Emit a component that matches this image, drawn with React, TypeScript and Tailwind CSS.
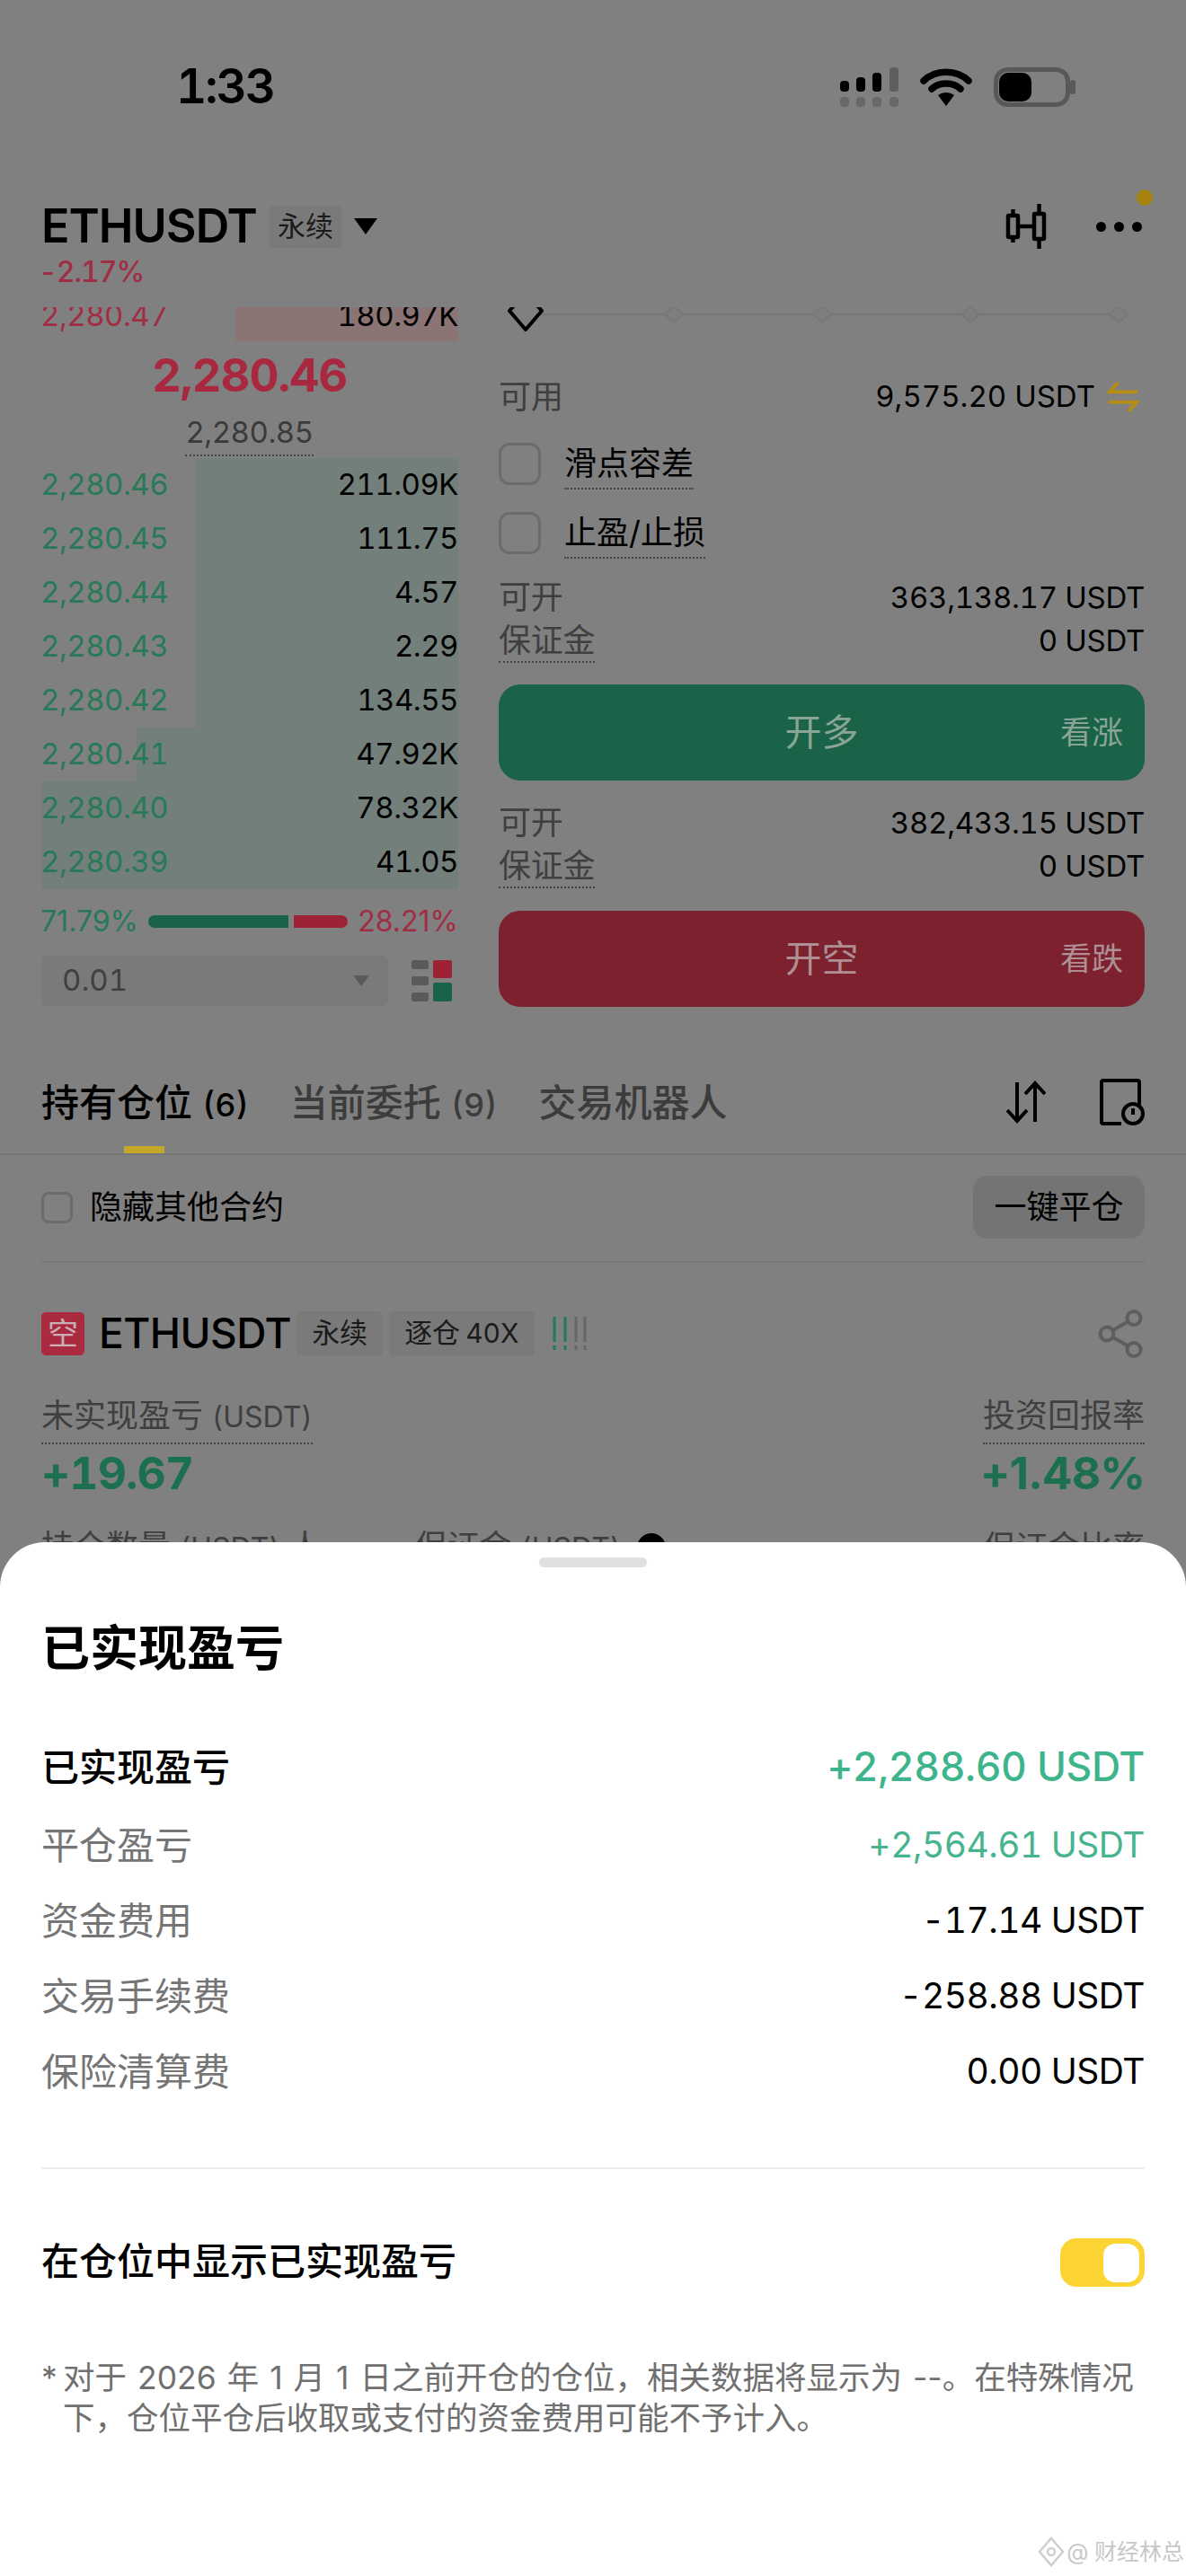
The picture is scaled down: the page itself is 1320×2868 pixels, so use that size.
import React from 'react';
import { Share2 } from 'lucide-react';

const bids = [
  { price: '2,280.46', size: '211.09K', left: 172 },
  { price: '2,280.45', size: '111.75', left: 172 },
  { price: '2,280.44', size: '4.57', left: 172 },
  { price: '2,280.43', size: '2.29', left: 172 },
  { price: '2,280.42', size: '134.55', left: 172 },
  { price: '2,280.41', size: '47.92K', left: 106 },
  { price: '2,280.40', size: '78.32K', left: 0 },
  { price: '2,280.39', size: '41.05', left: 0 },
];

const pnlRows = [
  { label: '平仓盈亏', value: '+2,564.61 USDT', green: true },
  { label: '资金费用', value: '-17.14 USDT', green: false },
  { label: '交易手续费', value: '-258.88 USDT', green: false },
  { label: '保险清算费', value: '0.00 USDT', green: false },
];

function StatusIcons() {
  return (
    <div className="flex items-center gap-[24px]">
      <svg width="65" height="44" viewBox="0 0 65 44">
        <rect x="0" y="15" width="10" height="12" rx="4" fill="#000" />
        <rect x="18" y="11" width="10" height="16" rx="4" fill="#000" />
        <rect x="36" y="6" width="10" height="21" rx="4" fill="#000" />
        <rect x="55" y="0" width="10" height="27" rx="3" fill="#5e5e5e" />
        <rect x="0" y="33" width="10" height="11" rx="4" fill="#686868" />
        <rect x="18" y="33" width="10" height="11" rx="4" fill="#686868" />
        <rect x="36" y="33" width="10" height="11" rx="4" fill="#686868" />
        <rect x="55" y="33" width="10" height="11" rx="4" fill="#686868" />
      </svg>
      <svg width="58" height="42" viewBox="0 0 58 42" fill="none">
        <path d="M4 14 C17 1 41 1 54 14" stroke="#000" strokeWidth="7.5" strokeLinecap="round" />
        <path d="M13 23 C21 15 37 15 45 23" stroke="#000" strokeWidth="7.5" strokeLinecap="round" />
        <path d="M20 30 L29 42 L38 30 C33 26 25 26 20 30 Z" fill="#000" />
      </svg>
      <svg width="92" height="44" viewBox="0 0 92 44" fill="none">
        <rect x="2.5" y="2.5" width="80" height="39" rx="13" stroke="#585858" strokeWidth="5" />
        <rect x="6" y="6" width="36" height="32" rx="10" fill="#000" />
        <rect x="85" y="14" width="6" height="16" rx="3" fill="#585858" />
      </svg>
    </div>
  );
}

function CandleIcon() {
  return (
    <svg width="46" height="50" viewBox="0 0 46 50" fill="none" stroke="#000" strokeWidth="4.5">
      <rect x="3" y="13" width="11" height="24" rx="1" />
      <path d="M8.5 6v7M8.5 37v6M14 25h18" />
      <rect x="32" y="11" width="11" height="28" rx="1" />
      <path d="M37.5 1v10M37.5 39v10" strokeLinecap="round" />
    </svg>
  );
}

function SwapIcon() {
  return (
    <svg width="36" height="38" viewBox="0 0 38 38" fill="none" stroke="#b58d12" strokeWidth="4">
      <path d="M36 13H3l10-11" />
      <path d="M2 25h33L25 36" />
    </svg>
  );
}

function Checkbox({ className }: { className: string }) {
  return <div className={`border-[3px] border-[#6c6c6c] shrink-0 ${className}`} />;
}

function Tag({ children }: { children: React.ReactNode }) {
  return (
    <div className="h-[49px] px-[17px] flex items-center bg-[#7a7a7a] rounded-[4px] text-[31px] text-[#1a1a1a]">
      {children}
    </div>
  );
}

function FundsRow({ label, value, dotted }: { label: string; value: string; dotted?: boolean }) {
  return (
    <div className="flex justify-between h-[46px] leading-[46px] text-[33px] tracking-[-0.3px] text-[#000]">
      <span className={`text-[36px] text-[#3f3f3f] ${dotted ? 'border-b-2 border-dotted border-[#444] h-[48px]' : ''}`}>
        {label}
      </span>
      <span>{value}</span>
    </div>
  );
}

function TradeButton({ bg, label, hint, text }: { bg: string; label: string; hint: string; text: string }) {
  return (
    <div className={`relative h-[107px] rounded-[24px] flex items-center justify-center ${bg} ${text}`}>
      <span className="text-[41px]">{label}</span>
      <span className="absolute right-[24px] text-[35px]">{hint}</span>
    </div>
  );
}

export default function App() {
  return (
    <div className="relative w-[1320px] h-[2868px] overflow-hidden bg-[#808080] text-black tabular-nums font-['Inter','Noto_Sans_CJK_SC',sans-serif]">
      {/* status bar */}
      <div className="h-[194px] flex items-center justify-between pl-[196px] pr-[122px]">
        <span className="text-[53px] font-semibold tracking-[-2px]">1:33</span>
        <StatusIcons />
      </div>

      {/* header */}
      <div className="mt-[30px] h-[56px] px-[46px] flex items-center">
        <span className="text-[52px] font-semibold tracking-[-1px] leading-none">ETHUSDT</span>
        <div className="ml-[14px] h-[47px] w-[80px] flex items-center justify-center bg-[#7a7a7a] rounded-[4px] text-[31px] text-[#1a1a1a]">
          永续
        </div>
        <svg className="ml-[14px]" width="26" height="18" viewBox="0 0 26 18">
          <path d="M0 0h26L13 18z" fill="#000" />
        </svg>
        <div className="ml-auto mr-[55px]">
          <CandleIcon />
        </div>
        <div className="relative flex gap-[9px] pr-[3px]">
          <div className="w-[11px] h-[11px] rounded-full bg-black" />
          <div className="w-[11px] h-[11px] rounded-full bg-black" />
          <div className="w-[11px] h-[11px] rounded-full bg-black" />
          <div className="absolute right-[-9px] top-[-36px] w-[18px] h-[18px] rounded-full bg-[#a8820f]" />
        </div>
      </div>
      <div className="h-[46px] pl-[43px] leading-[46px] text-[32px] font-medium tracking-[-1px] text-[#a02d44]">-2.17%</div>

      {/* order book + order form */}
      <div className="mt-[16px] flex pl-[45px]">
        <div className="w-[465px] shrink-0">
          <div className="relative h-[38px] overflow-hidden">
            <div className="absolute inset-y-0 right-0 left-[217px] bg-[#8a7474]" />
            <div className="relative -mt-[20px] h-[60px] flex items-center justify-between text-[33px] tracking-[-0.5px]">
              <span className="text-[#a02d44]">2,280.47</span>
              <span>180.97K</span>
            </div>
          </div>
          <div className="h-[76px] flex items-center justify-center text-[51px] font-bold tracking-[-1px] text-[#a8283f]">
            2,280.46
          </div>
          <div className="h-[54px] flex flex-col items-center">
            <span className="mt-[2px] leading-[46px] pb-[2px] text-[33px] tracking-[-0.5px] text-[#3a3a3a] border-b-2 border-dotted border-[#444]">
              2,280.85
            </span>
          </div>
          {bids.map((b) => (
            <div key={b.price} className="relative h-[60px] flex items-center justify-between text-[33px] tracking-[-0.5px]">
              <div className="absolute inset-y-0 right-0 bg-[#737f7a]" style={{ left: b.left ? b.left + 1 : 1 }} />
              <span className="relative text-[#27795a]">{b.price}</span>
              <span className="relative">{b.size}</span>
            </div>
          ))}
          <div className="h-[72px] flex items-center justify-between text-[32px] normal-nums">
            <span className="text-[#27795a]">71.79%</span>
            <div className="flex gap-[6px]">
              <div className="w-[156px] h-[14px] bg-[#19634a] rounded-l-full" />
              <div className="w-[60px] h-[14px] bg-[#9e2236] rounded-r-full" />
            </div>
            <span className="text-[#a02d44]">28.21%</span>
          </div>
          <div className="mt-[2px] flex items-center justify-between">
            <div className="ml-[1px] w-[386px] h-[56px] pl-[23px] pr-[21px] bg-[#7a7a7a] rounded-[6px] flex items-center justify-between text-[33px] text-[#404040]">
              0.01
              <svg width="18" height="12" viewBox="0 0 18 12">
                <path d="M0 0h18L9 12z" fill="#5a5a5a" />
              </svg>
            </div>
            <svg className="mr-[7px]" width="45" height="46" viewBox="0 0 45 46">
              <rect x="0" y="0" width="19" height="10" rx="2" fill="#5a5a5a" />
              <rect x="0" y="18" width="19" height="10" rx="2" fill="#5a5a5a" />
              <rect x="0" y="36" width="19" height="10" rx="2" fill="#5a5a5a" />
              <rect x="24" y="0" width="21" height="20" rx="2" fill="#9e2236" />
              <rect x="24" y="25" width="21" height="21" rx="2" fill="#19634a" />
            </svg>
          </div>
        </div>

        <div className="ml-[45px] w-[719px]">
          <svg className="block" width="719" height="30" viewBox="0 0 719 30" fill="none">
            <path d="M30 8H690" stroke="#777777" strokeWidth="2.5" />
            {[195, 360, 525, 690].map((x) => (
              <path key={x} d={`M${x} -1l10 9-10 9-10-9z`} fill="#7e7e7e" stroke="#787878" strokeWidth="2" />
            ))}
            <path d="M12 4 L30 -16 L48 4 L30 25 Z" fill="#808080" stroke="#000" strokeWidth="4" strokeLinejoin="round" />
          </svg>
          <div className="mt-[47px] h-[46px] flex items-center justify-between text-[33px]">
            <span className="text-[36px] text-[#3f3f3f]">可用</span>
            <span className="flex items-center gap-[13px] pr-[6px]">
              9,575.20 USDT
              <SwapIcon />
            </span>
          </div>
          <div className="mt-[28px] h-[52px] flex items-start gap-[26px]">
            <Checkbox className="w-[47px] h-[47px] rounded-[12px]" />
            <span className="text-[36px] leading-[46px] h-[52px] border-b-2 border-dotted border-[#444]">滑点容差</span>
          </div>
          <div className="mt-[25px] h-[52px] flex items-start gap-[26px]">
            <Checkbox className="w-[47px] h-[47px] rounded-[12px]" />
            <span className="text-[36px] leading-[46px] h-[52px] border-b-2 border-dotted border-[#444]">止盈/止损</span>
          </div>
          <div className="mt-[20px]">
            <FundsRow label="可开" value="363,138.17 USDT" />
          </div>
          <div className="mt-[2px]">
            <FundsRow label="保证金" value="0 USDT" dotted />
          </div>
          <div className="mt-[26px]">
            <TradeButton bg="bg-[#1b6348]" label="开多" hint="看涨" text="text-[#8aa598]" />
          </div>
          <div className="mt-[24px]">
            <FundsRow label="可开" value="382,433.15 USDT" />
          </div>
          <div className="mt-[2px]">
            <FundsRow label="保证金" value="0 USDT" dotted />
          </div>
          <div className="mt-[27px]">
            <TradeButton bg="bg-[#7d212f]" label="开空" hint="看跌" text="text-[#ad8f94]" />
          </div>
        </div>
      </div>

      {/* tabs */}
      <div className="border-b-2 border-[#757575]">
        <div className="mt-[61px] h-[90px] px-[46px] flex items-center text-[42px]">
          <span className="font-medium">
            持有仓位 <span className="text-[36px]">(6)</span>
          </span>
          <span className="ml-[46px] text-[#3c3c3c] font-medium">
            当前委托 <span className="text-[36px]">(9)</span>
          </span>
          <span className="ml-[46px] text-[#3c3c3c] font-medium">交易机器人</span>
          <svg className="ml-auto" width="44" height="48" viewBox="0 0 44 48" fill="none" stroke="#000" strokeWidth="4">
            <path d="M13 2v42M2 33l11 12 11-12" transform="translate(-1 0)" />
            <path d="M33 46V4M22 15L33 3l11 12" transform="translate(-1 0)" />
          </svg>
          <svg className="ml-[60px]" width="50" height="52" viewBox="0 0 50 52" fill="none" stroke="#000" strokeWidth="4">
            <path d="M24 50H4a2 2 0 0 1-2-2V4a2 2 0 0 1 2-2h38a2 2 0 0 1 2 2v25" />
            <circle cx="37" cy="39" r="11" />
            <path d="M37 33v7" />
          </svg>
        </div>
        <div className="ml-[138px] mt-[4px] w-[45px] h-[8px] bg-[#c4a82c]" />
      </div>

      {/* hide others + close all */}
      <div className="mx-[46px] pt-[23px] pb-[25px] border-b-2 border-[#777777] flex items-center justify-between">
        <div className="flex items-center gap-[19px] text-[36px]">
          <Checkbox className="w-[35px] h-[35px] rounded-[8px]" />
          隐藏其他合约
        </div>
        <div className="h-[70px] w-[191px] flex items-center justify-center rounded-[16px] bg-[#747474] text-[36px]">
          一键平仓
        </div>
      </div>

      {/* position */}
      <div className="px-[46px]">
        <div className="mt-[54px] h-[49px] flex items-center">
          <div className="w-[48px] h-[48px] rounded-[5px] bg-[#aa2a40] flex items-center justify-center text-[34px] text-[#c9b0b4]">
            空
          </div>
          <span className="ml-[16px] text-[46px] font-medium tracking-[-0.5px]">ETHUSDT</span>
          <div className="ml-[6px]">
            <Tag>永续</Tag>
          </div>
          <div className="ml-[7px]">
            <Tag>
              逐仓 <span className="ml-[6px] text-[30px]">40X</span>
            </Tag>
          </div>
          <svg className="ml-[20px]" width="38" height="38" viewBox="0 0 38 38" fill="none" strokeWidth="3">
            <path d="M2 0v28M2 32v5" stroke="#1f7a57" />
            <path d="M14 0v28M14 32v5" stroke="#1f7a57" />
            <path d="M26 0v28M26 32v5" stroke="#666" />
            <path d="M36 0v28M36 32v5" stroke="#666" />
          </svg>
          <Share2 className="ml-auto -mr-[3px] text-[#5e5e5e]" size={60} strokeWidth={1.6} />
        </div>
        <div className="mt-[44px] flex justify-between text-[36px] text-[#3f3f3f] leading-[46px]">
          <span className="pb-[5px] border-b-2 border-dotted border-[#444]">
            未实现盈亏 <span className="text-[32px]">(USDT)</span>
          </span>
          <span className="pb-[5px] border-b-2 border-dotted border-[#444]">投资回报率</span>
        </div>
        <div className="mt-[1px] h-[62px] flex items-center justify-between text-[50px] font-bold text-[#1c7050] tracking-[-1px]">
          <span>+19.67</span>
          <span className="normal-nums">+1.48%</span>
        </div>
        <div className="mt-[28px] flex items-center text-[36px] text-[#3f3f3f] leading-[46px]">
          <span>
            持仓数量 <span className="text-[32px]">(USDT)</span> 人
          </span>
          <span className="ml-[104px]">
            保证金 <span className="text-[32px]">(USDT)</span>
          </span>
          <div className="ml-[18px] w-[32px] h-[32px] rounded-full bg-black" />
          <span className="ml-auto">保证金比率</span>
        </div>
      </div>

      {/* bottom sheet */}
      <div className="absolute inset-x-0 top-[1717px] bottom-0 bg-white rounded-t-[50px] px-[46px] flex flex-col">
        <div className="mx-auto mt-[17px] w-[120px] h-[11px] rounded-full bg-[#e0e0e0]" />
        <div className="mt-[59px] h-[64px] leading-[64px] text-[54px] font-bold">已实现盈亏</div>
        <div className="mt-[57px] h-[84px] flex items-center justify-between">
          <span className="text-[42px] font-medium">已实现盈亏</span>
          <span className="text-[44.5px] font-medium tracking-[-0.4px] text-[#3eb48c]">+2,288.60 USDT</span>
        </div>
        <div className="mt-[3px]">
          {pnlRows.map((r) => (
            <div key={r.label} className="h-[84px] flex items-center justify-between">
              <span className="text-[42px] text-[#757575]">{r.label}</span>
              <span className={`text-[39px] tracking-[-0.5px] ${r.green ? 'text-[#46b48e]' : 'text-black'}`}>{r.value}</span>
            </div>
          ))}
        </div>
        <div className="mt-[65px] h-[2px] bg-[#eeeeee]" />
        <div className="mt-[77px] h-[54px] flex items-center justify-between">
          <span className="-mt-[3px] text-[42px] font-medium">在仓位中显示已实现盈亏</span>
          <div className="w-[94px] h-[54px] rounded-[18px] bg-[#fcd535] flex justify-end items-center pr-[6px]">
            <div className="w-[40px] h-[43px] rounded-[13px] bg-white" />
          </div>
        </div>
        <div className="mt-[79px] flex text-[35.5px] leading-[45px] normal-nums [word-spacing:2px] text-[#707070]">
          <span className="w-[24px] shrink-0">*</span>
          <span>对于 2026 年 1 月 1 日之前开仓的仓位，相关数据将显示为 --。在特殊情况下，仓位平仓后收取或支付的资金费用可能不予计入。</span>
        </div>
        <div className="absolute right-[2px] bottom-[8px] flex items-center gap-[2px] text-[25px] text-[#c8c8c8]">
          <svg width="30" height="34" viewBox="0 0 30 34" fill="none" stroke="#cfcfcf" strokeWidth="2.5">
            <path d="M15 2l13 15-13 15L2 17z" />
            <circle cx="15" cy="17" r="4" />
          </svg>
          @ 财经林总
        </div>
      </div>
    </div>
  );
}
